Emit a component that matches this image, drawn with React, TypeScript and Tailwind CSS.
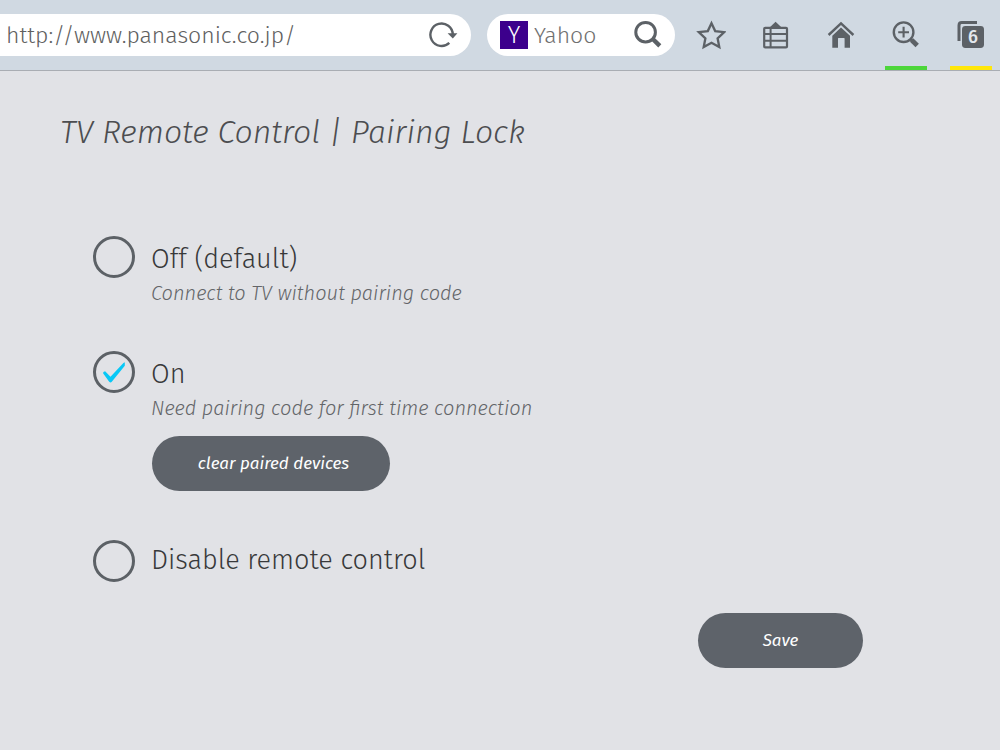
import { useState } from 'react';
import type { ReactNode } from 'react';

type Mode = 'off' | 'on' | 'disabled';

function ToolButton({ label, accent, children }: { label: string; accent: string; children: ReactNode }) {
  return (
    <button type="button" aria-label={label} className={`flex w-[42px] items-center justify-center border-b-4 pt-1 ${accent}`}>
      {children}
    </button>
  );
}

function StarIcon() {
  return (
    <svg viewBox="696 20 30 30" className="size-[30px] shrink-0" fill="none" stroke="#5c6166" strokeWidth="2.3">
      <path d="M711.5 23.2 715.2 31.1 724.2 32.2 717.6 38.3 719.3 47.1 711.5 42.8 703.7 47.1 705.4 38.3 698.8 32.2 707.8 31.1Z" />
    </svg>
  );
}

function ListIcon() {
  return (
    <svg viewBox="761 20 30 30" className="size-[30px] shrink-0" fill="none" stroke="#5c6166" strokeWidth="2.2">
      <rect x="764.2" y="27.8" width="22.8" height="19.6" rx="1" />
      <path d="M770.6 27v21M764 34.1h23M764 40.8h23" strokeWidth="2" />
      <path d="M769.6 27.4 775.6 21.8l6 5.6Z" fill="#5c6166" stroke="none" />
    </svg>
  );
}

function HomeIcon() {
  return (
    <svg viewBox="826 20 30 30" className="size-[30px] shrink-0">
      <path d="M828.6 35 841 23.4 853.4 35" fill="none" stroke="#5c6166" strokeWidth="2.4" />
      <path d="M841 27.4 850 35.8V47.8H844.6V38.6Q844.6 38 844 38H838.6Q838 38 838 38.6V47.8H832.3V35.8Z" fill="#5c6166" />
    </svg>
  );
}

function ZoomIcon() {
  return (
    <svg viewBox="891 20 30 30" className="size-[30px] shrink-0" fill="none" stroke="#5c6166">
      <circle cx="903.6" cy="32.2" r="9.8" strokeWidth="2.4" />
      <path d="M903.6 26.8v10.8M898.2 32.2h10.8" strokeWidth="2.1" />
      <path d="M910.4 38.8 912 40.4" strokeWidth="2.8" />
      <path d="M911.6 40 917.2 45.4" strokeWidth="4.8" />
    </svg>
  );
}

function TabsIcon() {
  return (
    <svg viewBox="956 20 30 30" className="size-[30px] shrink-0">
      <path d="M959 41V25.4Q959 22.6 961.8 22.6H977" fill="none" stroke="#5c6166" strokeWidth="3" />
      <rect x="962" y="26" width="22" height="22" rx="3.4" fill="#5c6166" />
      <text x="973" y="43.4" textAnchor="middle" fill="#e3e8ed" fontSize="18" fontWeight="500">6</text>
    </svg>
  );
}

function Option({ id, title, note, checked, onSelect }: { id: string; title: string; note?: string; checked: boolean; onSelect: () => void }) {
  return (
    <div className="flex items-start gap-4">
      <span className="grid size-[42px] shrink-0 place-items-center">
        <input
          type="radio"
          id={id}
          name="pairing"
          checked={checked}
          onChange={onSelect}
          className="col-start-1 row-start-1 size-[42px] appearance-none rounded-full border-3 border-[#5c6166]"
        />
        {checked && (
          <svg viewBox="0 0 24 24" className="pointer-events-none col-start-1 row-start-1 size-6" fill="#08c8f6">
            <path d="M1.2 13.4Q.8 12.2 1.9 11.7L3.1 11.3 8.5 16.8 21.4 3 22.8 2.2V5.8L9.8 21.8Q8.5 23.2 7.2 21.7Z" />
          </svg>
        )}
      </span>
      <div className={note ? 'pt-[3px]' : ''}>
        <label htmlFor={id} className="block text-[27px] leading-10 font-light text-[#38393a]">{title}</label>
        {note && <p className="text-[20px] leading-7 font-light text-[#636568] italic">{note}</p>}
      </div>
    </div>
  );
}

export default function App() {
  const [mode, setMode] = useState<Mode>('on');
  return (
    <div className="min-h-screen bg-[#e1e2e6] font-['Fira_Sans','Noto_Sans',sans-serif]">
      <header className="flex h-[71px] border-b border-[#a9adb3] bg-[#d0d9e2] pr-2">
        <form className="mt-[14px] flex h-[42px] flex-1 items-center rounded-r-full bg-white pr-[13px] pl-[6px]">
          <input aria-label="Address" defaultValue="http://www.panasonic.co.jp/" className="min-w-0 flex-1 text-[23px] font-light text-[#606060] outline-none" />
          <button type="button" aria-label="Reload">
            <svg viewBox="428 20 30 30" className="size-[30px]" fill="none" stroke="#5c6166" strokeWidth="2.4">
              <path d="M449.3 42.9A11.2 11.2 0 1 1 452.8 34.5" />
              <path d="M447.6 33.2H457.4L452.8 38.6Z" fill="#5c6166" stroke="none" />
            </svg>
          </button>
        </form>
        <form className="mt-[14px] ml-4 flex h-[42px] w-[188px] items-center rounded-full bg-white pr-3 pl-[13px]">
          <span className="flex size-7 shrink-0 items-center justify-center bg-[#3c008c] text-[24px] font-light text-white">Y</span>
          <input aria-label="Search" defaultValue="Yahoo" className="ml-[6px] min-w-0 flex-1 text-[23px] font-light text-[#707070] outline-none" />
          <button type="button" aria-label="Search the web">
            <svg viewBox="633 20 30 30" className="size-[30px]" fill="none" stroke="#5c6166">
              <circle cx="645.6" cy="32.2" r="9.8" strokeWidth="3" />
              <path d="M652.3 38.5 659.8 45.8" strokeWidth="4.4" />
            </svg>
          </button>
        </form>
        <nav className="ml-[15px] flex gap-[23px]">
          <ToolButton label="Bookmark" accent="border-transparent"><StarIcon /></ToolButton>
          <ToolButton label="Bookmark list" accent="border-transparent"><ListIcon /></ToolButton>
          <ToolButton label="Home" accent="border-transparent"><HomeIcon /></ToolButton>
          <ToolButton label="Zoom in" accent="border-[#4cd63b]"><ZoomIcon /></ToolButton>
          <ToolButton label="Tabs" accent="border-[#ffe70a]"><TabsIcon /></ToolButton>
        </nav>
      </header>
      <main className="px-[60px] pt-10">
        <h1 className="text-[32px] leading-[42px] font-light text-[#4c4d50] italic">TV Remote Control | Pairing Lock</h1>
        <form className="mt-[83px] pl-[33px]">
          <Option id="off" title="Off (default)" note="Connect to TV without pairing code" checked={mode === 'off'} onSelect={() => setMode('off')} />
          <div className="mt-11">
            <Option id="on" title="On" note="Need pairing code for first time connection" checked={mode === 'on'} onSelect={() => setMode('on')} />
            <button type="button" className="mt-[14px] ml-[59px] h-[55px] w-[238px] rounded-full bg-[#5e636a] pl-[5px] text-[17px] text-white italic">clear paired devices</button>
          </div>
          <div className="mt-[49px]">
            <Option id="disabled" title="Disable remote control" checked={mode === 'disabled'} onSelect={() => setMode('disabled')} />
          </div>
          <div className="mt-[31px] flex justify-end pr-[77px]">
            <button type="button" className="h-[55px] w-[165px] rounded-full bg-[#5e636a] text-[17px] text-white italic">Save</button>
          </div>
        </form>
      </main>
    </div>
  );
}
